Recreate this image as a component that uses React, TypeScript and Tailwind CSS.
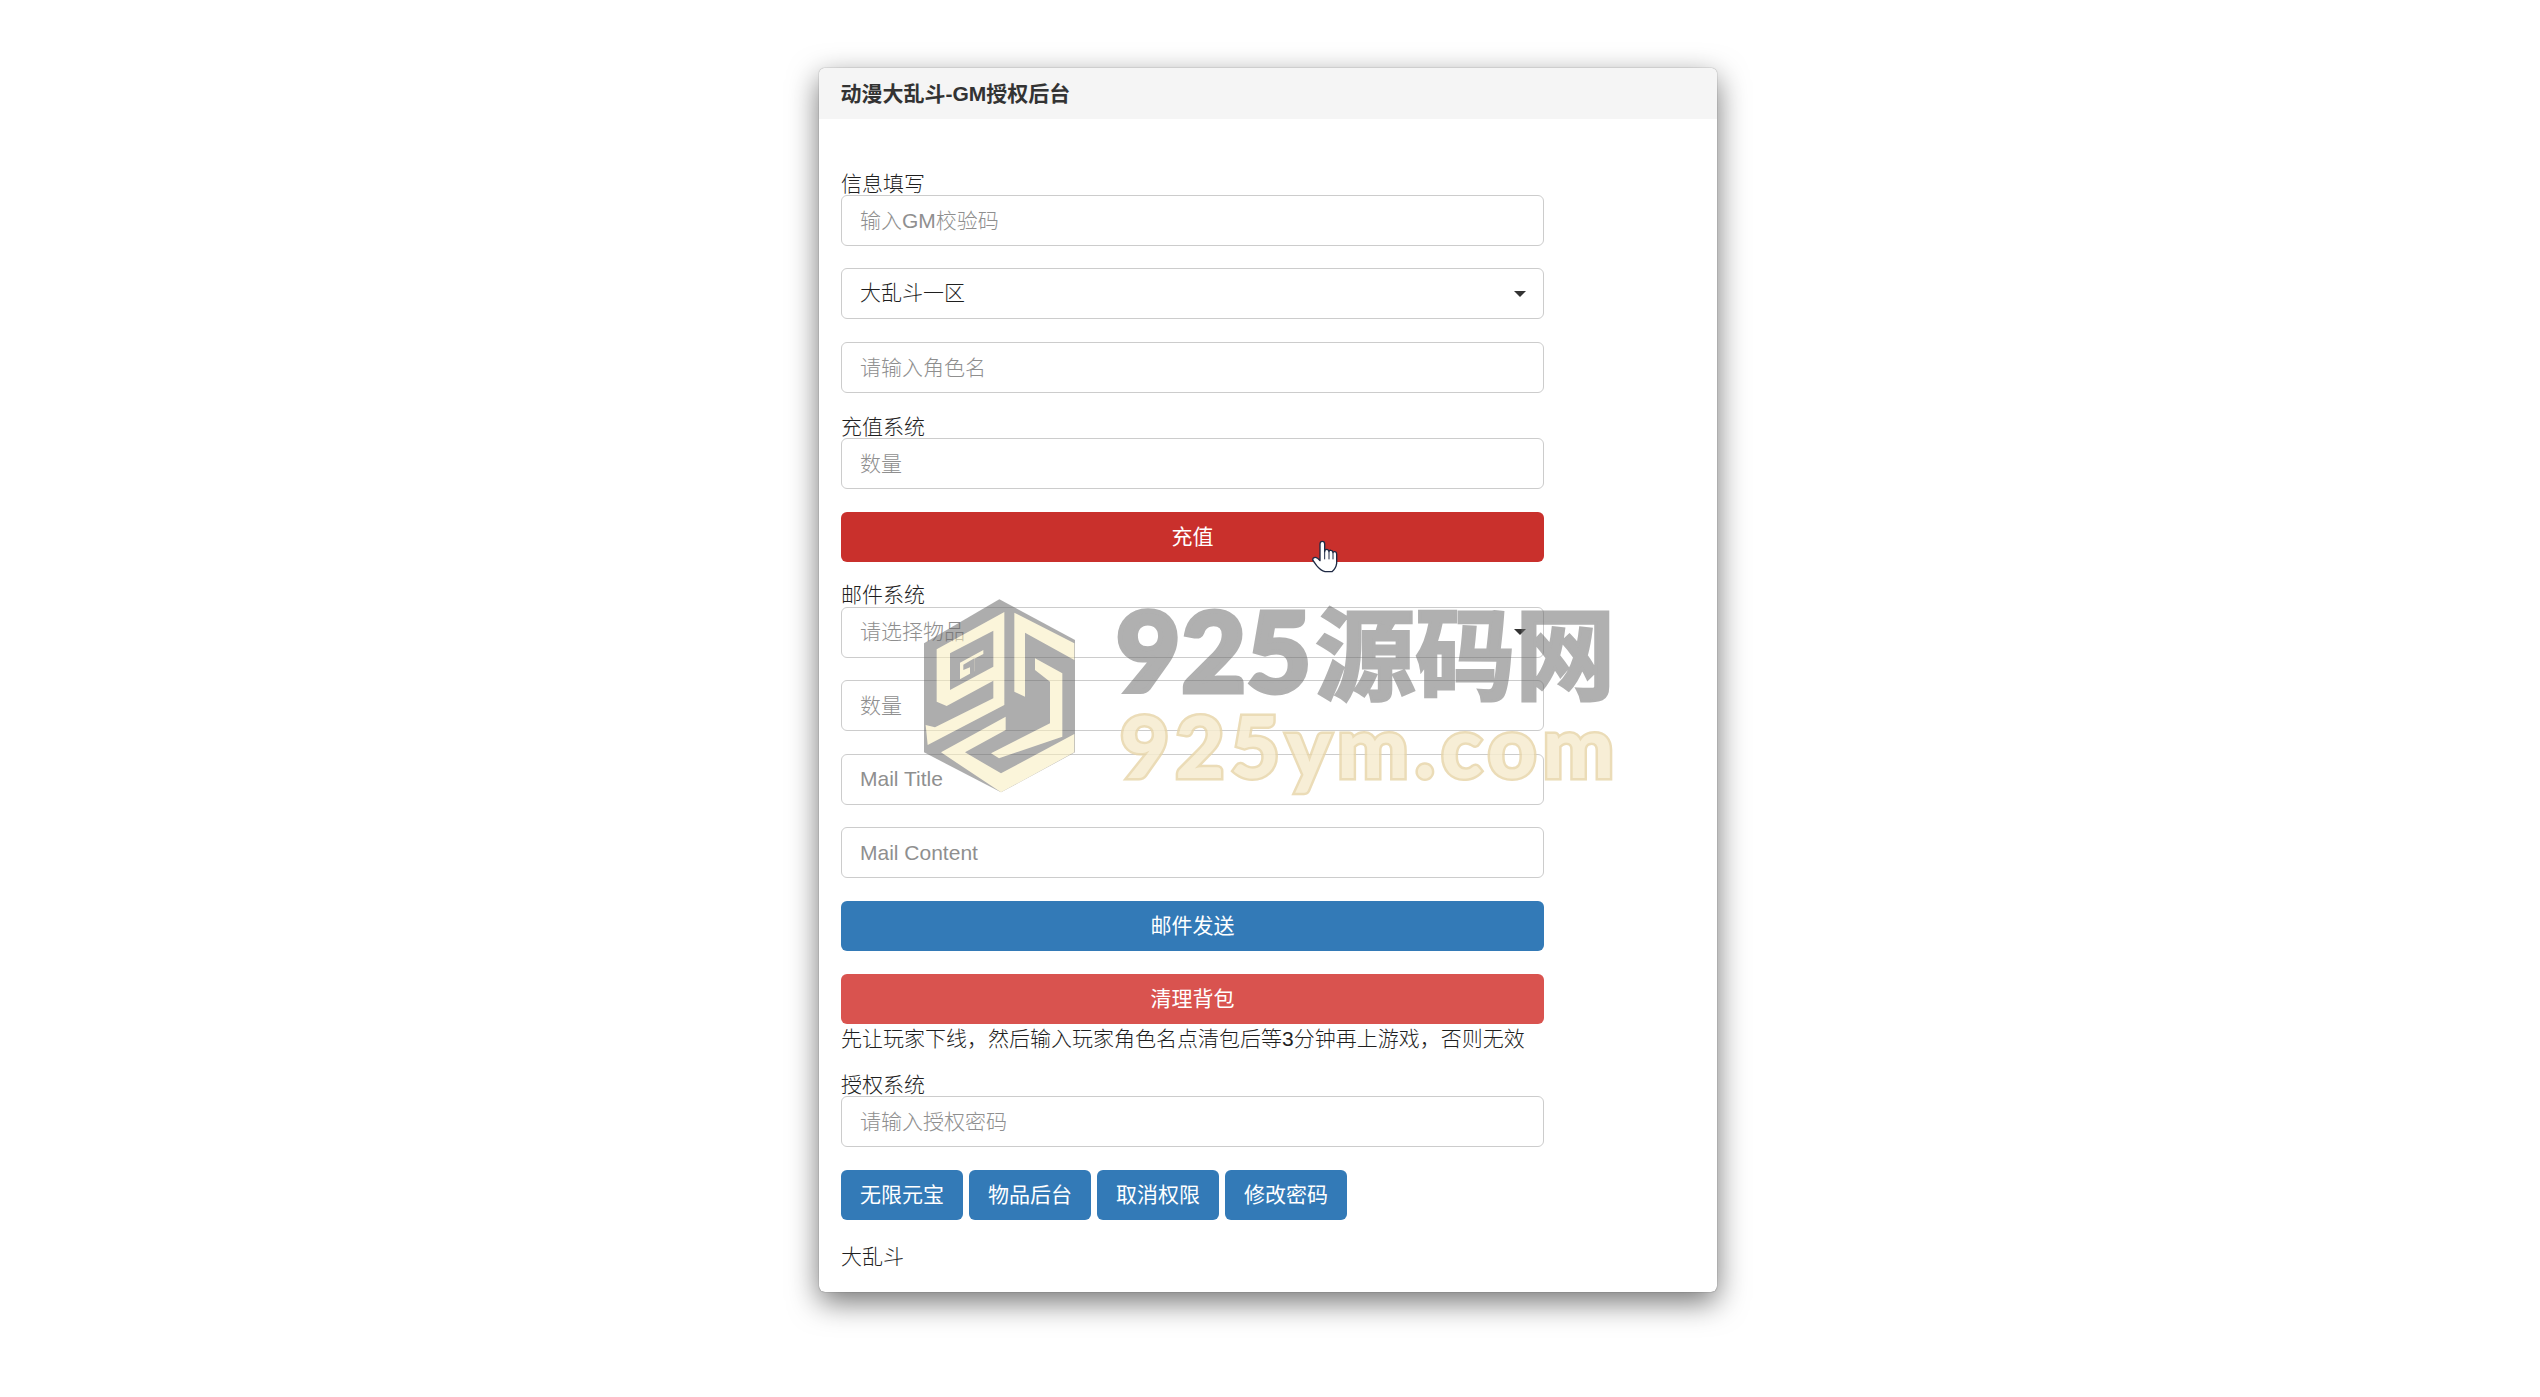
import React from "react";

const inputCls =
  "block w-full h-[51px] px-[18px] mb-[22.5px] rounded-[6px] border border-[#ccc] bg-white text-[21px] font-light text-[#555] placeholder:text-[#8f8f8f] outline-none";
const labelCls = "block h-[22.5px] leading-[22px] text-[21px] font-light text-[#1f1f1f]";
const blockBtn = "block w-full h-[50px] mb-[23px] rounded-[6px] text-white text-[21px] font-normal text-center";
const smallBtn = "w-[122px] h-[50px] rounded-[6px] bg-[#337ab7] text-white text-[21px] font-normal text-center";

function Caret({ className }: { className: string }) {
  return (
    <svg className={className} width="12" height="6" viewBox="0 0 12 6">
      <path d="M0 0h12L6 6z" fill="currentColor" />
    </svg>
  );
}

function Logo() {
  const g = "#6b6b6b";
  const b = "#f9edbd";
  return (
    <svg className="absolute left-[915px] top-[590px] pointer-events-none opacity-[0.55]" width="170" height="210" viewBox="0 0 510 630">
      <path fill={g} d="M253 28L480 150V487L258 607L27 487V160Z" />
      <polygon fill={b} points="268,66 65,178 65,335 95,348 235,272 235,325 60,412 32,405 38,465 268,345" />
      <polygon fill={g} points="235,122 105,190 105,300 235,230" />
      <polygon fill={b} points="205,180 135,218 135,268 178,244 178,206 205,192" />
      <polygon fill={g} points="178,205 145,224 145,240 165,232 165,262 178,255" />
      <polygon fill={b} points="78,487 272,380 272,420 150,487 258,550 478,432 478,487 258,607" />
      <polygon fill={b} points="298,68 478,160 478,210 330,128 330,320 298,305" />
      <polygon fill={b} points="360,205 442,250 442,440 252,505 228,490 405,400 405,275 360,240" />
    </svg>
  );
}

function Watermark() {
  return (
    <div className="absolute left-[1116px] top-[590px] pointer-events-none font-['Lato','Noto_Sans_CJK_SC',sans-serif] font-black whitespace-nowrap">
      <div className="flex items-baseline h-[118px] leading-[118px] text-[#6b6b6b] opacity-[0.53]">
        <span className="text-[111px] tracking-[1px] [-webkit-text-stroke:5px_#6b6b6b]">925</span>
        <span className="text-[100px] ml-[3px] font-['Noto_Sans_CJK_SC',sans-serif] font-bold [-webkit-text-stroke:3px_#6b6b6b]">源码网</span>
      </div>
      <div className="mt-[-13px] ml-[4px] h-[100px] leading-[100px] text-[85px] tracking-[6px] text-[#f6ecd0] opacity-[0.85] [-webkit-text-stroke:5px_#e8d6ab] [paint-order:stroke_fill]">
        925ym.com
      </div>
    </div>
  );
}

function Hand() {
  return (
    <svg className="absolute left-[1300px] top-[500px] pointer-events-none" width="60" height="80" viewBox="0 0 180 240">
      <path
        d="M60 132Q60 124 67 124Q74 124 74 132V155Q74 148 80 148Q86 148 87 155Q88 150 93 151Q98 151 99 158Q100 154 105 155Q110 156 110 163V190Q108 205 96 215H75Q62 212 50 197L38 180Q38 172 46 172Q52 172 60 182Z"
        fill="#fff"
        stroke="#1f2a44"
        strokeWidth="4"
        strokeLinejoin="round"
      />
      <path d="M74 155V178M87 155V178M99 158V178" stroke="#1f2a44" strokeWidth="3" fill="none" />
    </svg>
  );
}

export default function App() {
  return (
    <div className="relative h-[1397px] overflow-hidden bg-white pt-[67.5px] font-['Liberation_Sans','Noto_Sans_CJK_SC',sans-serif]">
      <div className="ml-[818.5px] w-[898.5px] h-[1224.5px] rounded-[6px] bg-white shadow-[0_10px_30px_rgba(0,0,0,0.55),0_0_1px_rgba(0,0,0,0.7)]">
        <div className="h-[51.5px] px-[22px] pt-[1px] rounded-t-[6px] bg-[#f5f5f5] flex items-center text-[21px] font-bold text-[#333]">
          动漫大乱斗-GM授权后台
        </div>
        <div className="pl-[22.5px] pt-[53.5px] w-[725.5px]">
          <label className={labelCls}>信息填写</label>
          <input className={`${inputCls} !mb-[22px]`} placeholder="输入GM校验码" />
          <div className={`${inputCls} !mb-[23px] flex items-center justify-between !text-[#1f1f1f]`}>
            <span className="mt-[-1px]">大乱斗一区</span>
            <Caret className="text-[#333] mr-[-1px]" />
          </div>
          <input className={inputCls} placeholder="请输入角色名" />

          <label className={labelCls}>充值系统</label>
          <input className={inputCls} placeholder="数量" />
          <button className={`${blockBtn} !mb-[22.5px] bg-[#c9302c]`}>充值</button>

          <label className={labelCls}>邮件系统</label>
          <div className={`${inputCls} flex items-center justify-between`}>
            <span className="mt-[-1px] text-[#8f8f8f]">请选择物品</span>
            <Caret className="text-[#333] mr-[-1px]" />
          </div>
          <input className={inputCls} placeholder="数量" />
          <input className={inputCls} placeholder="Mail Title" />
          <input className={inputCls} placeholder="Mail Content" />
          <button className={`${blockBtn} bg-[#337ab7]`}>邮件发送</button>
          <button className={`${blockBtn} bg-[#d9534f] !mb-0`}>清理背包</button>
          <p className="h-[30px] leading-[30px] text-[21px] font-light text-[#1f1f1f] whitespace-nowrap">
            先让玩家下线，然后输入玩家角色名点清包后等3分钟再上游戏，否则无效
          </p>
          <label className={`${labelCls} mt-[20px]`}>授权系统</label>
          <input className={inputCls} placeholder="请输入授权密码" />
          <div className="flex gap-[6px]">
            <button className={smallBtn}>无限元宝</button>
            <button className={smallBtn}>物品后台</button>
            <button className={smallBtn}>取消权限</button>
            <button className={smallBtn}>修改密码</button>
          </div>
          <p className="mt-[22px] h-[30px] leading-[30px] text-[21px] font-light text-[#1f1f1f]">大乱斗</p>
        </div>
      </div>
      <Logo />
      <Watermark />
      <Hand />
    </div>
  );
}
